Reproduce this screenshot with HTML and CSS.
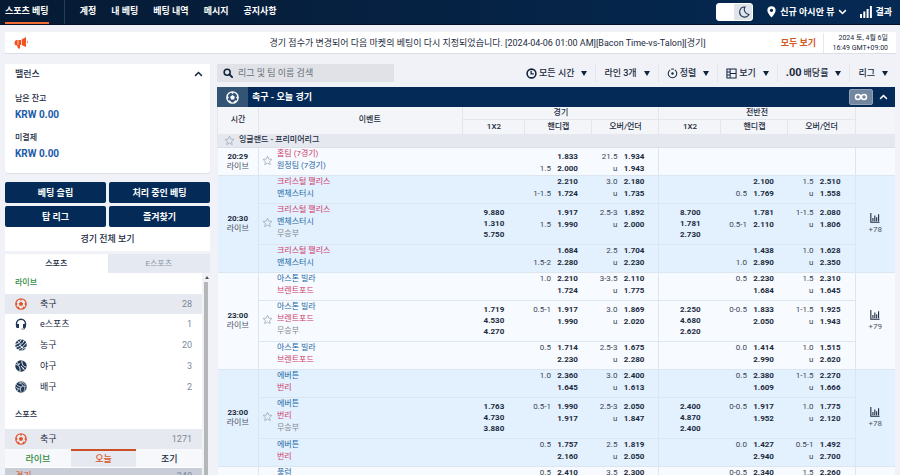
FILE: index.html
```html
<!DOCTYPE html>
<html lang="ko">

<head>
    <meta charset="UTF-8" />
    <meta name="viewport" content="width=device-width, initial-scale=1.0" />
    <title>스포츠 베팅</title>
    <link rel="stylesheet" href="styles.css">
</head>

<body>
    <!-- shared icons -->
    <svg class="sprite" aria-hidden="true">
        <symbol id="star" viewBox="0 0 24 24">
            <path d="M12 2.500l2.800 6.400 7 .7-5.300 4.600 1.600 6.900L12 17.500l-6.100 3.600 1.600-6.900L2.200 9.600l7-.7z" fill="none" stroke="currentColor" stroke-width="1.800" stroke-linejoin="round" />
        </symbol>
        <symbol id="bars" viewBox="0 0 12 12">
            <path d="M1 0v11h10.500M3.500 10V6M5.800 10V3M8 10V5M10.300 10V1.500" fill="none" stroke="currentColor" stroke-width="1.300" />
        </symbol>
        <symbol id="soccer" viewBox="0 0 24 24">
            <circle cx="12" cy="12" r="10.500" fill="none" stroke="currentColor" stroke-width="2.400" />
            <path d="M12 7.500l4.300 3.100-1.600 5.100H9.300l-1.600-5.100z" fill="currentColor" />
            <path d="M8 2.500L12 5.500l4-3zM2 8.500l3.500 3.500L2 15zM22 8.500L18.500 12l3.500 3zM5 20l1.500-3.500 4 5zM19 20l-1.500-3.500-4 5z" fill="currentColor" />
        </symbol>
        <symbol id="headset" viewBox="0 0 24 24">
            <path d="M3 15v-3.500a9 9 0 0 1 18 0V15" fill="none" stroke="currentColor" stroke-width="2.800" />
            <path d="M2 12h6v8H5a3 3 0 0 1-3-3zM16 12h6v5a3 3 0 0 1-3 3h-3z" fill="currentColor" />
            <path d="M19 19v3h-6" fill="none" stroke="currentColor" stroke-width="1.500" />
        </symbol>
        <symbol id="basketball" viewBox="0 0 24 24">
            <circle cx="12" cy="12" r="11.500" fill="currentColor" />
            <path d="M0 11C6 10 11 6 13 0M1 17C9 15 16 9 19 2M4 22C12 19 19 13 23 7M11 24c3-4 8-7 13-8M5 4l6 5M9 12l7 6" fill="none" stroke="#fff" stroke-width="2" />
        </symbol>
        <symbol id="baseball" viewBox="0 0 24 24">
            <circle cx="12" cy="12" r="11.500" fill="currentColor" />
            <path d="M1 9c6 0 10 5 9 14M14 1c-1 8 3 13 9 13M3 4l6 6M12 12l7 8M7 9l2-2M15 18l3-2" fill="none" stroke="#fff" stroke-width="1.900" />
        </symbol>
        <symbol id="volleyball" viewBox="0 0 24 24">
            <circle cx="12" cy="12" r="11.500" fill="currentColor" />
            <path d="M12 12C6 11 3 8 2 5M12 12c-2 5-1 8 1 11M12 12c5-3 9-2 11 0M1 11c3 4 7 5 10 5M5 20c1-2 1-3 1-5M9 2c5 0 9 2 12 6M7 4c4 0 8 2 9 6M17 21c3-3 3-6 2-10" fill="none" stroke="#fff" stroke-width="1.400" />
        </symbol>
        <symbol id="chevron" viewBox="0 0 12 8">
            <path d="M1.500 6.500L6 2l4.500 4.500" fill="none" stroke="currentColor" stroke-width="2" />
        </symbol>
    </svg>

    <header class="topbar">
        <nav class="nav">
            <a class="nav-link active" href="#">스포츠 베팅</a>
            <a class="nav-link" href="#">계정</a>
            <a class="nav-link" href="#">내 베팅</a>
            <a class="nav-link" href="#">베팅 내역</a>
            <a class="nav-link" href="#">메시지</a>
            <a class="nav-link" href="#">공지사항</a>
        </nav>
        <div class="top-tools">
            <button class="theme-switch" type="button" aria-label="다크 모드">
                <span class="knob"></span>
                <svg viewBox="0 0 12 12"><path d="M7 1a5 5 0 1 0 4 7.500A5 5 0 0 1 7 1z" fill="none" stroke="#233a57" stroke-width="1.100" /></svg>
            </button>
            <button class="view-select" type="button">
                <svg class="pin" viewBox="0 0 10 13"><path d="M5 0a4.600 4.600 0 0 0-4.600 4.600C.4 8 5 12.500 5 12.500S9.600 8 9.600 4.600A4.600 4.600 0 0 0 5 0zm0 2.800a1.800 1.800 0 1 1 0 3.600 1.800 1.800 0 0 1 0-3.600z" fill="#fff" /></svg>
                신규 아시안 뷰
                <svg class="chev down"><use href="#chevron" /></svg>
            </button>
            <a class="results" href="#">
                <svg viewBox="0 0 12 12"><path d="M0 8h2v4H0zM3.300 5.500h2V12h-2zM6.600 3h2v9h-2zM9.900 0h2v12h-2z" fill="#fff" /></svg>
                결과
            </a>
        </div>
    </header>

    <section class="notice">
        <svg class="horn" viewBox="0 0 14 12"><path d="M12 0v10L7.500 8 6 8v3.500H4L3 8.500C1 8.500.5 7.500.5 6S1.200 3 3 3h4zM13 3.500c1 .6 1 2.400 0 3z" fill="#f4511e" /><path d="M4 3v5M7.500 3v5" stroke="#fff" stroke-width=".7" /></svg>
        <p class="notice-text">경기 점수가 변경되어 다음 마켓의 베팅이 다시 지정되었습니다. [2024-04-06 01:00 AM][Bacon Time-vs-Talon][경기]</p>
        <a class="notice-all" href="#">모두 보기</a>
        <div class="clock">2024 토, 4월 6일<br>16:49 GMT+09:00</div>
    </section>

    <div class="layout">
        <aside class="sidebar">
            <section class="balance">
                <h2>밸런스 <svg class="chev"><use href="#chevron" /></svg></h2>
                <dl>
                    <dt>남은 잔고</dt>
                    <dd>KRW 0.00</dd>
                    <dt>미결제</dt>
                    <dd>KRW 0.00</dd>
                </dl>
            </section>

            <div class="quick">
                <button type="button">베팅 슬립</button>
                <button type="button">처리 중인 베팅</button>
                <button type="button">탑 리그</button>
                <button type="button">즐겨찾기</button>
            </div>
            <a class="view-all" href="#">경기 전체 보기</a>

            <div class="sport-tabs">
                <button class="active" type="button">스포츠</button>
                <button type="button">E스포츠</button>
            </div>

            <div class="sports">
                <div class="sports-list">
                    <h3 class="live">라이브</h3>
                    <a class="sport active" href="#"><svg><use href="#soccer" /></svg>축구<span>28</span></a>
                    <a class="sport" href="#"><svg><use href="#headset" /></svg>e스포츠<span>1</span></a>
                    <a class="sport" href="#"><svg><use href="#basketball" /></svg>농구<span>20</span></a>
                    <a class="sport" href="#"><svg><use href="#baseball" /></svg>야구<span>3</span></a>
                    <a class="sport" href="#"><svg><use href="#volleyball" /></svg>배구<span>2</span></a>
                    <h3 class="all">스포츠</h3>
                    <a class="sport active" href="#"><svg><use href="#soccer" /></svg>축구<span>1271</span></a>
                    <div class="day-tabs">
                        <button class="live" type="button">라이브</button>
                        <button class="active" type="button">오늘</button>
                        <button type="button">조기</button>
                    </div>
                    <a class="market" href="#">경기<span>340</span></a>
                </div>
                <div class="scrollbar"><i class="arrow"></i><i class="thumb"></i></div>
            </div>
        </aside>

        <main class="content">
            <div class="toolbar">
                <label class="search">
                    <svg viewBox="0 0 12 12"><circle cx="5" cy="5" r="3.600" fill="none" stroke="#10243e" stroke-width="1.900" /><path d="M7.800 7.800L11 11" stroke="#10243e" stroke-width="2.200" stroke-linecap="round" /></svg>
                    <input type="text" placeholder="리그 및 팀 이름 검색" aria-label="리그 및 팀 이름 검색">
                </label>
                <div class="filters">
                    <button type="button">
                        <svg viewBox="0 0 12 12"><circle cx="6" cy="6" r="4.800" fill="none" stroke="#10243e" stroke-width="1.700" /><path d="M5.600 3v3.400H8.500" fill="none" stroke="#10243e" stroke-width="1.400" /></svg>
                        모든 시간 <i class="caret"></i>
                    </button>
                    <button type="button">라인 3개 <i class="caret"></i></button>
                    <button type="button">
                        <svg viewBox="0 0 12 12"><path d="M3.500 2A4.700 4.700 0 1 0 8.500 2" fill="none" stroke="#10243e" stroke-width="1.100" /><circle cx="6" cy="6" r="1.300" fill="#10243e" /><path d="M4.500 1.200h3" stroke="#10243e" stroke-width="1.100" /></svg>
                        정렬 <i class="caret"></i>
                    </button>
                    <button type="button">
                        <svg viewBox="0 0 12 12"><path d="M1 1h10v10H1zM4.500 1v10M4.500 6H11M1 4.300h3.500M1 7.600h3.500" fill="none" stroke="#10243e" stroke-width="1.100" /></svg>
                        보기 <i class="caret"></i>
                    </button>
                    <button type="button"><b>.00</b> 배당률 <i class="caret"></i></button>
                    <button type="button">리그 <i class="caret"></i></button>
                </div>
            </div>

            <div class="sport-head">
                <span class="sport-icon"><svg><use href="#soccer" /></svg></span>
                <h1>축구 - 오늘 경기</h1>
                <button class="loop" type="button" aria-label="모두 표시"><svg viewBox="0 0 14 8"><circle cx="4" cy="4" r="2.500" /><circle cx="10" cy="4" r="2.500" /></svg></button>
                <button class="fold" type="button" aria-label="접기"><svg class="chev"><use href="#chevron" /></svg></button>
            </div>

            <table class="odds-table">
                <colgroup>
                    <col class="c-time">
                    <col>
                    <col class="c-win">
                    <col class="c-line">
                    <col class="c-line">
                    <col class="c-win">
                    <col class="c-line">
                    <col class="c-line">
                    <col class="c-more">
                </colgroup>
                <thead>
                    <tr>
                        <th rowspan="2">시간</th>
                        <th class="event-head" rowspan="2">이벤트</th>
                        <th class="group" colspan="3">경기</th>
                        <th class="group" colspan="3">전반전</th>
                        <th rowspan="2"></th>
                    </tr>
                    <tr class="sub">
                        <th>1X2</th>
                        <th>핸디캡</th>
                        <th>오버/언더</th>
                        <th>1X2</th>
                        <th>핸디캡</th>
                        <th>오버/언더</th>
                    </tr>
                    <tr class="league">
                        <th colspan="9"><div><svg class="star"><use href="#star" /></svg>잉글랜드 - 프리미어리그</div></th>
                    </tr>
                </thead>

                <tbody class="match low">
                    <tr>
                        <td class="time"><b>20:29</b>라이브</td>
                        <td><div class="event"><svg class="star"><use href="#star" /></svg><div class="teams"><span class="fav">홈팀 (7경기)</span><span>원정팀 (7경기)</span></div></div></td>
                        <td></td>
                        <td><div class="odds"><i></i><b>1.833</b><i>1.5</i><b>2.000</b></div></td>
                        <td><div class="odds"><i>21.5</i><b>1.934</b><i>u</i><b>1.943</b></div></td>
                        <td class="half"></td>
                        <td></td>
                        <td></td>
                        <td class="more"></td>
                    </tr>
                </tbody>

                <tbody class="match blue">
                    <tr>
                        <td class="time" rowspan="3"><b>20:30</b>라이브</td>
                        <td><div class="event"><div class="teams"><span class="fav">크리스털 팰리스</span><span>맨체스터시</span></div></div></td>
                        <td></td>
                        <td><div class="odds"><i></i><b>2.210</b><i>1-1.5</i><b>1.724</b></div></td>
                        <td><div class="odds"><i>3.0</i><b>2.180</b><i>u</i><b>1.735</b></div></td>
                        <td class="half"></td>
                        <td><div class="odds"><i></i><b>2.100</b><i>0.5</i><b>1.769</b></div></td>
                        <td><div class="odds"><i>1.5</i><b>2.510</b><i>u</i><b>1.558</b></div></td>
                        <td class="more" rowspan="3"><a href="#"><svg><use href="#bars" /></svg>+78</a></td>
                    </tr>
                    <tr class="main">
                        <td><div class="event"><svg class="star"><use href="#star" /></svg><div class="teams"><span class="fav">크리스털 팰리스</span><span>맨체스터시</span><span class="draw">무승부</span></div></div></td>
                        <td><div class="win"><b>9.880</b><b>1.310</b><b>5.750</b></div></td>
                        <td><div class="odds"><i></i><b>1.917</b><i>1.5</i><b>1.990</b></div></td>
                        <td><div class="odds"><i>2.5-3</i><b>1.892</b><i>u</i><b>2.000</b></div></td>
                        <td class="half"><div class="win"><b>8.700</b><b>1.781</b><b>2.730</b></div></td>
                        <td><div class="odds"><i></i><b>1.781</b><i>0.5-1</i><b>2.110</b></div></td>
                        <td><div class="odds"><i>1-1.5</i><b>2.080</b><i>u</i><b>1.806</b></div></td>
                    </tr>
                    <tr>
                        <td><div class="event"><div class="teams"><span class="fav">크리스털 팰리스</span><span>맨체스터시</span></div></div></td>
                        <td></td>
                        <td><div class="odds"><i></i><b>1.684</b><i>1.5-2</i><b>2.280</b></div></td>
                        <td><div class="odds"><i>2.5</i><b>1.704</b><i>u</i><b>2.230</b></div></td>
                        <td class="half"></td>
                        <td><div class="odds"><i></i><b>1.438</b><i>1.0</i><b>2.890</b></div></td>
                        <td><div class="odds"><i>1.0</i><b>1.628</b><i>u</i><b>2.350</b></div></td>
                    </tr>
                </tbody>

                <tbody class="match">
                    <tr>
                        <td class="time" rowspan="3"><b>23:00</b>라이브</td>
                        <td><div class="event"><div class="teams"><span>아스톤 빌라</span><span class="fav">브렌트포드</span></div></div></td>
                        <td></td>
                        <td><div class="odds"><i>1.0</i><b>2.210</b><i></i><b>1.724</b></div></td>
                        <td><div class="odds"><i>3-3.5</i><b>2.110</b><i>u</i><b>1.775</b></div></td>
                        <td class="half"></td>
                        <td><div class="odds"><i>0.5</i><b>2.230</b><i></i><b>1.684</b></div></td>
                        <td><div class="odds"><i>1.5</i><b>2.310</b><i>u</i><b>1.645</b></div></td>
                        <td class="more" rowspan="3"><a href="#"><svg><use href="#bars" /></svg>+79</a></td>
                    </tr>
                    <tr class="main">
                        <td><div class="event"><svg class="star"><use href="#star" /></svg><div class="teams"><span>아스톤 빌라</span><span class="fav">브렌트포드</span><span class="draw">무승부</span></div></div></td>
                        <td><div class="win"><b>1.719</b><b>4.530</b><b>4.270</b></div></td>
                        <td><div class="odds"><i>0.5-1</i><b>1.917</b><i></i><b>1.990</b></div></td>
                        <td><div class="odds"><i>3.0</i><b>1.869</b><i>u</i><b>2.020</b></div></td>
                        <td class="half"><div class="win"><b>2.250</b><b>4.680</b><b>2.620</b></div></td>
                        <td><div class="odds"><i>0-0.5</i><b>1.833</b><i></i><b>2.050</b></div></td>
                        <td><div class="odds"><i>1-1.5</i><b>1.925</b><i>u</i><b>1.943</b></div></td>
                    </tr>
                    <tr>
                        <td><div class="event"><div class="teams"><span>아스톤 빌라</span><span class="fav">브렌트포드</span></div></div></td>
                        <td></td>
                        <td><div class="odds"><i>0.5</i><b>1.714</b><i></i><b>2.230</b></div></td>
                        <td><div class="odds"><i>2.5-3</i><b>1.675</b><i>u</i><b>2.280</b></div></td>
                        <td class="half"></td>
                        <td><div class="odds"><i>0.0</i><b>1.414</b><i></i><b>2.990</b></div></td>
                        <td><div class="odds"><i>1.0</i><b>1.515</b><i>u</i><b>2.620</b></div></td>
                    </tr>
                </tbody>

                <tbody class="match blue">
                    <tr>
                        <td class="time" rowspan="3"><b>23:00</b>라이브</td>
                        <td><div class="event"><div class="teams"><span>에버튼</span><span class="fav">번리</span></div></div></td>
                        <td></td>
                        <td><div class="odds"><i>1.0</i><b>2.360</b><i></i><b>1.645</b></div></td>
                        <td><div class="odds"><i>3.0</i><b>2.400</b><i>u</i><b>1.613</b></div></td>
                        <td class="half"></td>
                        <td><div class="odds"><i>0.5</i><b>2.380</b><i></i><b>1.609</b></div></td>
                        <td><div class="odds"><i>1-1.5</i><b>2.270</b><i>u</i><b>1.666</b></div></td>
                        <td class="more" rowspan="3"><a href="#"><svg><use href="#bars" /></svg>+78</a></td>
                    </tr>
                    <tr class="main">
                        <td><div class="event"><svg class="star"><use href="#star" /></svg><div class="teams"><span>에버튼</span><span class="fav">번리</span><span class="draw">무승부</span></div></div></td>
                        <td><div class="win"><b>1.763</b><b>4.730</b><b>3.880</b></div></td>
                        <td><div class="odds"><i>0.5-1</i><b>1.990</b><i></i><b>1.917</b></div></td>
                        <td><div class="odds"><i>2.5-3</i><b>2.050</b><i>u</i><b>1.847</b></div></td>
                        <td class="half"><div class="win"><b>2.400</b><b>4.870</b><b>2.400</b></div></td>
                        <td><div class="odds"><i>0-0.5</i><b>1.917</b><i></i><b>1.952</b></div></td>
                        <td><div class="odds"><i>1.0</i><b>1.775</b><i>u</i><b>2.120</b></div></td>
                    </tr>
                    <tr>
                        <td><div class="event"><div class="teams"><span>에버튼</span><span class="fav">번리</span></div></div></td>
                        <td></td>
                        <td><div class="odds"><i>0.5</i><b>1.757</b><i></i><b>2.160</b></div></td>
                        <td><div class="odds"><i>2.5</i><b>1.819</b><i>u</i><b>2.050</b></div></td>
                        <td class="half"></td>
                        <td><div class="odds"><i>0.0</i><b>1.427</b><i></i><b>2.940</b></div></td>
                        <td><div class="odds"><i>0.5-1</i><b>1.492</b><i>u</i><b>2.700</b></div></td>
                    </tr>
                </tbody>

                <tbody class="match">
                    <tr>
                        <td class="time"></td>
                        <td><div class="event"><div class="teams"><span>풀럼</span></div></div></td>
                        <td></td>
                        <td><div class="odds"><i>0.5</i><b>2.410</b></div></td>
                        <td><div class="odds"><i>3.5</i><b>2.300</b></div></td>
                        <td class="half"></td>
                        <td><div class="odds"><i>0-0.5</i><b>2.340</b></div></td>
                        <td><div class="odds"><i>1.5</i><b>2.260</b></div></td>
                        <td class="more"></td>
                    </tr>
                </tbody>
            </table>
        </main>
    </div>
</body>

</html>
```

FILE: styles.css
```css
* {
    box-sizing: border-box;
}

body {
    font-family: Roboto, "Noto Sans CJK KR", sans-serif;
    font-size: 9px;
    line-height: 12px;
    color: #1b2b40;
    margin: 0;
    height: 100vh;
    display: flex;
    flex-direction: column;
    overflow: hidden;
    background: #f1f2f7;
}

h1, h2, h3, p, dl, dd {
    margin: 0;
    font-size: inherit;
}

a {
    color: inherit;
    text-decoration: none;
}

button, input {
    font: inherit;
    color: inherit;
    border: 0;
    padding: 0;
    background: none;
}

.sprite {
    display: none;
}

.chev {
    width: 9px;
    height: 6px;
}

.chev.down {
    transform: rotate(180deg);
}

/* Top bar */
.topbar {
    flex: none;
    display: flex;
    justify-content: space-between;
    height: 25px;
    padding: 0 8px 0 5px;
    color: #fff;
    font-weight: bold;
    background: linear-gradient(90deg, #061a33, #052a54);
    border-bottom: 1px solid #02122a;
}

.nav {
    display: flex;
    gap: 15px;
}

.nav-link {
    padding-top: 5px;
}

.nav-link.active {
    position: relative;
    border-bottom: 2px solid #f26a35;
    margin-right: 16px;
}

.nav-link.active::after {
    content: "";
    position: absolute;
    top: 0;
    right: -16px;
    height: 24px;
    border-left: 1px solid #2a3d57;
}

.top-tools {
    display: flex;
    align-items: center;
}

.theme-switch {
    display: flex;
    align-items: center;
    width: 37px;
    height: 18px;
    margin-right: 14px;
    background: #dfe3ea;
    border: 1px solid #fff;
    border-radius: 3px;
}

.theme-switch .knob {
    width: 17px;
    height: 16px;
    background: #fff;
}

.theme-switch svg {
    width: 12px;
    height: 12px;
    margin-left: 4px;
}

.view-select, .results {
    display: flex;
    align-items: center;
    gap: 4px;
}

.results {
    gap: 3px;
}

.view-select {
    margin-right: 13px;
}

.pin {
    width: 9px;
    height: 12px;
}

.results svg {
    width: 12px;
    height: 12px;
}

/* Notice */
.notice {
    flex: none;
    display: flex;
    align-items: center;
    height: 22px;
    margin: 7px 4px 0 5px;
    padding: 0 8px 0 9px;
    background: #fff;
    border-bottom: 1px solid #dcdfe6;
}

.horn {
    width: 14px;
    height: 12px;
}

.notice-text {
    flex: 1;
    padding-right: 75px;
    text-align: right;
}

.notice-all {
    color: #d35a1e;
    font-weight: bold;
}

.clock {
    width: 65px;
    margin-left: 7px;
    border-left: 1px solid #e6e8ee;
    font-size: 7px;
    line-height: 10px;
    text-align: right;
}

/* Layout */
.layout {
    flex: 1;
    min-height: 0;
    display: flex;
    gap: 7px;
    padding: 10px 5px 0;
}

.sidebar {
    flex: none;
    width: 205px;
    display: flex;
    flex-direction: column;
}

.content {
    flex: 1;
    min-width: 0;
}

/* Balance */
.balance {
    height: 109px;
    padding: 0 7px 0 10px;
    background: #fff;
    border-radius: 0 0 3px 3px;
    box-shadow: 0 1px 1px #dcdfe6;
}

.balance h2 {
    display: flex;
    align-items: center;
    justify-content: space-between;
    height: 19px;
    font-weight: 500;
}

.balance dt {
    margin-top: 10px;
    font-size: 8px;
    font-weight: 500;
}

.balance dd {
    margin: 4px 0 11px;
    font-size: 10px;
    font-weight: bold;
    color: #1c5ba8;
}

.quick {
    display: grid;
    grid-template-columns: 1fr 1fr;
    gap: 3px;
    margin-top: 9px;
}

.quick button {
    height: 21px;
    color: #fff;
    font-weight: bold;
    background: #042b57;
    border-radius: 2px;
}

.view-all {
    height: 24px;
    line-height: 25px;
    text-align: center;
    font-weight: 500;
    background: #fff;
}

.sport-tabs {
    display: flex;
    margin-top: 3px;
}

.sport-tabs button {
    flex: 1;
    height: 19px;
    font-size: 8px;
    color: #8c97a6;
    background: #e5e9f1;
}

.sport-tabs .active {
    color: #1b2b40;
    font-weight: 500;
    background: #fff;
}

/* Sports list */
.sports {
    flex: 1;
    min-height: 0;
    display: flex;
    background: #fff;
}

.sports-list {
    flex: 1;
}

.sports h3 {
    height: 21px;
    padding: 4px 10px 0;
    font-size: 8px;
    font-weight: 500;
}

.sports h3.all {
    height: 31px;
    padding-top: 11px;
}

.live {
    color: #2e8b3d;
}

.sport {
    display: flex;
    align-items: center;
    height: 20px;
    margin-bottom: 1px;
    padding: 0 10px;
}

.sport.active {
    margin-bottom: 0;
    background: #e6e9f0;
}

.sport svg {
    width: 12px;
    height: 12px;
    margin-right: 13px;
    color: #1f3856;
}

.sport.active svg {
    color: #e0532b;
}

.sport span, .market span {
    margin-left: auto;
    color: #7d8896;
}

.day-tabs {
    display: flex;
}

.day-tabs button {
    flex: 1;
    height: 18px;
    border-top: 2px solid transparent;
    background: #f7f8fb;
    font-weight: 500;
}

.day-tabs .active {
    color: #d9562a;
    border-color: #cc5027;
    background: #e6e9f0;
}

.market {
    display: flex;
    height: 20px;
    margin-top: 1px;
    padding: 2px 10px;
    color: #d9562a;
    background: #c8cdd7;
}

.scrollbar {
    width: 8px;
    background: #f1f2f5;
}

.scrollbar .arrow {
    display: block;
    width: 0;
    margin: 3px auto 3px 3px;
    border: 2px solid transparent;
    border-top: 0;
    border-bottom: 3px solid #555;
}

.scrollbar .thumb {
    display: block;
    width: 4px;
    height: 100%;
    margin-left: 2px;
    background: #b4b6ba;
}

/* Toolbar */
.toolbar {
    display: flex;
    justify-content: space-between;
    height: 18px;
    margin-bottom: 5px;
}

.search {
    display: flex;
    align-items: center;
    width: 177px;
    padding-left: 6px;
    background: #e0e2e7;
}

.search svg {
    flex: none;
    width: 10px;
    height: 10px;
    margin-right: 5px;
}

.search input {
    flex: 1;
    min-width: 0;
    outline: none;
}

.search input::placeholder {
    color: #666e79;
    opacity: 1;
}

.filters {
    display: flex;
}

.filters button {
    display: flex;
    align-items: center;
    gap: 2px;
    padding: 0 8px;
    border-left: 1px solid #e4e6ec;
    font-weight: 500;
}

.filters button:first-child {
    border-left: 0;
}

.filters button:last-child {
    padding-right: 7px;
}

.filters svg {
    width: 11px;
    height: 11px;
}

.filters b {
    font-size: 11px;
}

.caret {
    margin-left: 5px;
    border: 3px solid transparent;
    border-top: 5px solid #10243e;
    border-bottom: 0;
}

/* Sport heading */
.sport-head {
    display: flex;
    align-items: center;
    height: 20px;
    padding-right: 6px;
    color: #fff;
    background: #042b57;
}

.sport-head h1 {
    flex: 1;
    margin-left: 4px;
}

.sport-icon {
    display: flex;
    align-items: center;
    justify-content: center;
    width: 31px;
    height: 20px;
    background: #345476;
}

.sport-icon svg {
    width: 13px;
    height: 13px;
}

.loop {
    width: 24px;
    height: 16px;
    margin-right: 6px;
    background: #7388a0;
    border: 1px solid #8fa1b5;
    border-radius: 2px;
}

.loop svg {
    display: block;
    width: 14px;
    height: 8px;
    margin: auto;
    fill: none;
    stroke: #fff;
    stroke-width: 1.5;
}

.fold {
    display: flex;
    width: 10px;
}

/* Odds table */
.odds-table {
    width: 100%;
    table-layout: fixed;
    border-collapse: collapse;
    font-size: 8px;
}

.c-time {
    width: 41px;
}

.c-win {
    width: 62px;
}

.c-line {
    width: 67px;
}

.c-more {
    width: 40px;
}

.odds-table th {
    height: 14px;
    padding: 0;
    font-weight: 500;
    background: #f4f5f8;
    border-left: 1px solid #e3e6ec;
}

.odds-table th.group {
    height: 12px;
}

.odds-table th.event-head {
    padding-left: 18px;
}

.odds-table .sub th {
    border-top: 1px solid #e3e6ec;
}

.odds-table .league th {
    height: 14px;
    background: #e5e8ee;
    border-bottom: 1px solid #dcdfe6;
}

.league div {
    display: flex;
    align-items: center;
    gap: 4px;
    padding-left: 6px;
}

.star {
    flex: none;
    width: 11px;
    height: 11px;
    color: #a3adba;
}

.match {
    background: #f7fafe;
}

.match.blue {
    background: #e3f0fd;
}

.match tr {
    height: 28px;
}

.match .main {
    height: 41px;
}

.match td {
    padding: 0;
    vertical-align: top;
    border-bottom: 1px solid #dce6f0;
}

.match .time, .match .more {
    vertical-align: middle;
    text-align: center;
    line-height: 10px;
    color: #4b5665;
    border-right: 1px solid #dce6f0;
}

.match .more {
    border-right: 0;
    border-left: 1px solid #dce6f0;
}

.match .half {
    border-left: 1px solid #dce6f0;
}

.time b {
    display: block;
    color: #1b2b40;
}

.event {
    display: flex;
    align-items: center;
    justify-content: space-between;
    padding-left: 3px;
}

.teams {
    display: flex;
    flex-direction: column;
    width: 186px;
    margin-left: auto;
    color: #2268a5;
}

.teams .fav {
    color: #cf3a69;
}

.teams .draw {
    color: #84898f;
}

.odds {
    display: grid;
    grid-template-columns: 1fr 21px;
    column-gap: 6px;
    padding-right: 14px;
    text-align: right;
}

.odds i {
    font-style: normal;
    color: #3a4555;
}

.main .odds, .main .win, .low .odds {
    padding-top: 3px;
}

.win {
    display: flex;
    flex-direction: column;
    align-items: center;
    line-height: 11px;
}

.more a {
    display: flex;
    flex-direction: column;
    align-items: center;
    gap: 2px;
}

.more svg {
    width: 10px;
    height: 10px;
    color: #1b2b40;
}
```
